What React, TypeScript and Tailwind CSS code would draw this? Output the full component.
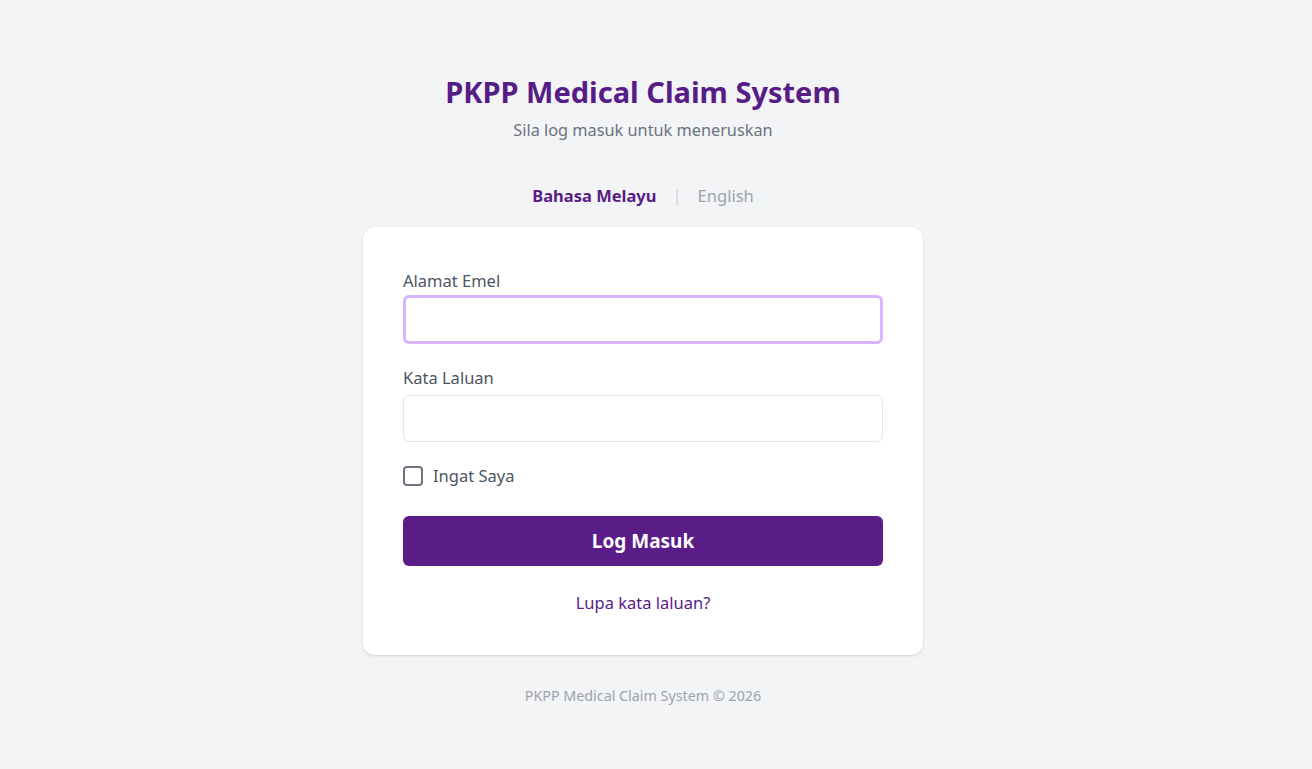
import React from 'react';

export default function App() {
  const font = { fontFamily: '"Noto Sans", "Open Sans", sans-serif' } as React.CSSProperties;

  return (
    <div className="min-h-screen w-full bg-[#f3f4f6] flex flex-col items-center pt-[72px] pr-[26px]" style={font}>
      {/* Header */}
      <h1 className="text-[29px] font-bold text-[#581c87] leading-[40px]">PKPP Medical Claim System</h1>
      <p className="mt-[6px] text-[16.3px] text-[#6b7280] leading-6">Sila log masuk untuk meneruskan</p>

      {/* Language switch */}
      <div className="mt-[42px] flex items-center gap-4 text-[16.5px] leading-6">
        <button className="font-bold text-[#581c87]">Bahasa Melayu</button>
        <span className="text-[#d1d5db]">|</span>
        <button className="text-[#9ca3af]">English</button>
      </div>

      {/* Card */}
      <div className="mt-[19px] w-[560px] bg-white rounded-xl shadow-[0_1px_3px_rgba(0,0,0,0.1),0_1px_2px_rgba(0,0,0,0.06)] px-10 pt-[42px] pb-[40px]">
        <label className="block text-[16.5px] text-[#4b5563] leading-6">Alamat Emel</label>
        <input
          type="email"
          autoFocus
          className="mt-[2px] block w-full h-[49px] rounded-md border-[3px] border-[#d8b4fe] px-4 text-base outline-none caret-black"
        />

        <label className="mt-[22px] block text-[16.5px] text-[#4b5563] leading-6">Kata Laluan</label>
        <input
          type="password"
          className="mt-[5px] block w-full h-[47px] rounded-md border border-[#e5e7eb] px-4 text-base outline-none"
        />

        <label className="mt-[22px] flex items-center gap-[10px] text-[16.5px] text-[#4b5563] leading-6">
          <span className="w-5 h-5 rounded-[4px] border-2 border-[#6b7280] bg-white" />
          Ingat Saya
        </label>

        <button className="mt-[28px] w-full h-[50px] rounded-md bg-[#5a1c86] text-white text-[19px] font-bold">
          Log Masuk
        </button>

        <div className="mt-[25px] text-center">
          <a className="text-[16.5px] text-[#581c87] leading-6">Lupa kata laluan?</a>
        </div>
      </div>

      <p className="mt-[30px] text-[14.3px] text-[#9ca3af]">PKPP Medical Claim System © 2026</p>
    </div>
  );
}
